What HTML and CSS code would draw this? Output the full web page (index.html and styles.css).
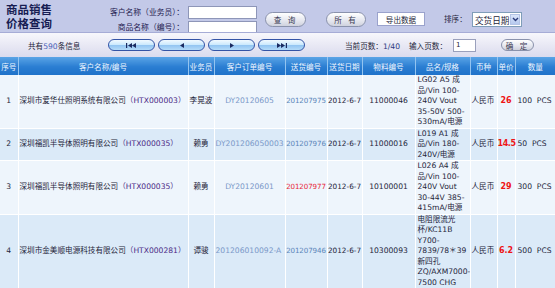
FILE: index.html
```html
<!DOCTYPE html>
<html lang="zh-CN">
<head>
<meta charset="UTF-8" />
<title>商品销售价格查询</title>
<link rel="stylesheet" href="styles.css">
</head>
<body>

<div class="topbar">
  <div class="brand">商品销售<br>价格查询</div>
  <div class="query">
    <label for="cust">客户名称（业务员）：</label>
    <input type="text" id="cust" class="field" />
    <label for="goods">商品名称（编号）：</label>
    <input type="text" id="goods" class="field" />
  </div>
  <button class="pill btn-search">查 询</button>
  <button class="pill btn-all">所 有</button>
  <button class="export">导出数据</button>
  <span class="sort-label">排序：</span>
  <div class="select">
    <span>交货日期</span>
    <span class="arrow">
      <svg width="7" height="5" viewBox="0 0 7 5"><path d="M1 1 L3.5 3.5 L6 1" fill="none" stroke="#2a3a78" stroke-width="1.4"/></svg>
    </span>
  </div>
</div>

<div class="pager">
  <span class="count">共有<b>590</b>条信息</span>
  <button class="nav"><svg width="11" height="5" viewBox="0 0 11 5"><rect x="0" y="0" width="1.2" height="5" fill="#1a2a60"/><path d="M6 0 L2 2.5 L6 5Z M10 0 L6 2.5 L10 5Z" fill="#1a2a60"/></svg></button>
  <button class="nav"><svg width="4" height="5" viewBox="0 0 4 5"><path d="M4 0 L0 2.5 L4 5Z" fill="#1a2a60"/></svg></button>
  <button class="nav"><svg width="4" height="5" viewBox="0 0 4 5"><path d="M0 0 L4 2.5 L0 5Z" fill="#1a2a60"/></svg></button>
  <button class="nav"><svg width="11" height="5" viewBox="0 0 11 5"><path d="M1 0 L5 2.5 L1 5Z M5 0 L9 2.5 L5 5Z" fill="#1a2a60"/><rect x="9.8" y="0" width="1.2" height="5" fill="#1a2a60"/></svg></button>
  <span class="page-now">当前页数：<b>1/40</b></span>
  <label class="page-label" for="page">输入页数：</label>
  <input type="text" id="page" class="page-input" value="1" />
  <button class="pill btn-ok">确 定</button>
</div>

<table class="list">
  <colgroup>
    <col style="width:18px"><col style="width:170px"><col style="width:26px"><col style="width:71px">
    <col style="width:42px"><col style="width:35px"><col style="width:53px"><col style="width:55px">
    <col style="width:27px"><col style="width:18px"><col style="width:40px">
  </colgroup>
  <thead>
    <tr>
      <th>序号</th><th>客户名称/编号</th><th>业务员</th><th>客户订单编号</th><th>送货编号</th><th>送货日期</th>
      <th>物料编号</th><th>品名/规格</th><th>币种</th><th>单价</th><th>数量</th>
    </tr>
  </thead>
  <tbody>
    <tr class="odd">
      <td>1</td>
      <td class="name">深圳市爱华仕照明系统有限公司<span class="code">（HTX000003）</span></td>
      <td>李晃波</td>
      <td class="order">DY20120605</td>
      <td class="ship">201207975</td>
      <td class="date">2012-6-7</td>
      <td>11000046</td>
      <td class="spec">LG02 A5 成<br>品/Vin 100-<br>240V Vout<br>35-50V 500-<br>530mA/电源</td>
      <td class="cur">人民币</td>
      <td class="price">26</td>
      <td class="qty">100&nbsp;&nbsp;PCS</td>
    </tr>
    <tr class="even">
      <td>2</td>
      <td class="name">深圳福凯半导体照明有限公司<span class="code">（HTX000035）</span></td>
      <td>赖勇</td>
      <td class="order left">DY201206050003</td>
      <td class="ship">201207976</td>
      <td class="date">2012-6-7</td>
      <td>11000016</td>
      <td class="spec">L019 A1 成<br>品/Vin 180-<br>240V/电源</td>
      <td class="cur">人民币</td>
      <td class="price left">14.5</td>
      <td class="qty">50&nbsp;&nbsp;PCS</td>
    </tr>
    <tr class="odd">
      <td>3</td>
      <td class="name">深圳福凯半导体照明有限公司<span class="code">（HTX000035）</span></td>
      <td>赖勇</td>
      <td class="order">DY20120601</td>
      <td class="ship red">201207977</td>
      <td class="date">2012-6-7</td>
      <td>10100001</td>
      <td class="spec">L026 A4 成<br>品/Vin 100-<br>240V Vout<br>30-44V 385-<br>415mA/电源</td>
      <td class="cur">人民币</td>
      <td class="price">29</td>
      <td class="qty">300&nbsp;&nbsp;PCS</td>
    </tr>
    <tr class="even">
      <td>4</td>
      <td class="name">深圳市金美顺电源科技有限公司<span class="code">（HTX000281）</span></td>
      <td>谭骏</td>
      <td class="order left">201206010092-A</td>
      <td class="ship">201207946</td>
      <td class="date">2012-6-7</td>
      <td>10300093</td>
      <td class="spec">电阻限流光<br>杯/KC11B<br>Y700-<br>7839/78＊39<br>新四孔<br>ZQ/AXM7000-<br>7500 CHG</td>
      <td class="cur">人民币</td>
      <td class="price">6.2</td>
      <td class="qty">500&nbsp;&nbsp;PCS</td>
    </tr>
  </tbody>
</table>

</body>
</html>
```

FILE: styles.css
```css
body { margin: 0; width: 555px; font-family: "DejaVu Sans", "Noto Sans CJK SC", sans-serif; font-size: 7.6px; color: #1e1e3a; background: #fff; }
button, input { font-family: inherit; font-size: inherit; color: inherit; margin: 0; }

.topbar { display: flex; align-items: flex-start; height: 32px; overflow: hidden; background: #c3c9e8; }
.brand { width: 56px; margin-top: 3px; padding-left: 6px; font-size: 11.5px; line-height: 14px; font-weight: bold; color: #161c52; }
.query { display: grid; grid-template-columns: 122px 69px; column-gap: 4px; row-gap: 2px; margin-top: 6px; }
.query label { text-align: right; line-height: 13px; color: #1e2050; font-size: 7.8px; }
.field { height: 13px; box-sizing: border-box; border: 1px solid #8e96b8; background: #fff; padding: 0; }

.pill { box-sizing: border-box; height: 15px; padding: 0; border: 1px solid #8a92ac; border-radius: 8px; background: linear-gradient(#ffffff, #e4e6ee 60%, #cfd2de); color: #3a3a52; cursor: pointer; letter-spacing: 2px; }
.btn-search { width: 41px; margin: 12px 0 0 8px; }
.btn-all { width: 40px; margin: 12px 0 0 20px; }
.export { box-sizing: border-box; width: 48px; height: 14px; margin: 12px 0 0 11px; padding: 0; border: 1px solid #9aa2cc; background: #fff; color: #1e1e3a; }
.sort-label { margin: 14px 0 0 19px; width: 26px; line-height: 12px; }
.select { box-sizing: border-box; display: flex; align-items: center; justify-content: space-between; width: 50px; height: 15px; margin: 12px 0 0 2px; padding-left: 2px; border: 1px solid #7f9db9; background: #fff; font-size: 8.6px; }
.arrow { display: flex; align-items: center; justify-content: center; width: 10px; height: 11px; margin-right: 1px; background: linear-gradient(#dbe6fb, #b6c9ef); border: 1px solid #b4c4e6; box-sizing: border-box; }

.pager { display: flex; align-items: center; height: 25px; background: linear-gradient(#f7f7fc, #e6e6f3 60%, #dadbee); border-top: 1px solid #a6acd6; box-sizing: border-box; }
.count { width: 80px; margin-left: 28px; }
.count b { font-weight: normal; color: #4a62b8; }
.nav { box-sizing: border-box; width: 47px; height: 12px; margin-right: 3px; padding: 0; display: flex; align-items: center; justify-content: center; border: 1px solid #3454a6; border-radius: 7px; background: linear-gradient(#f2faff, #cdeafd 45%, #94c6f2 55%, #b4dbf8); cursor: pointer; }
.page-now { margin-left: 37px; }
.page-now b { font-weight: normal; color: #2a3a80; }
.page-label { margin-left: 9px; }
.page-input { box-sizing: border-box; width: 23px; height: 13px; margin-left: 6px; padding: 0 0 0 2px; border: 1px solid #9aa0bc; background: #fff; font-size: 7px; }
.btn-ok { width: 33px; height: 12px; margin-left: 25px; }

.list { width: 555px; border-collapse: collapse; table-layout: fixed; }
.list th { height: 18px; padding: 0; background: linear-gradient(#5aa4e6, #2a7dd2 55%, #1f72c9); color: #eef6ff; font-weight: normal; border-right: 1px solid #93c4f0; white-space: nowrap; overflow: hidden; text-align: center; }
.list td { padding: 0; line-height: 10.5px; border-right: 1px solid #fff; border-bottom: 1px solid #fff; white-space: nowrap; overflow: hidden; text-align: center; }
.list th:last-child, .list td:last-child { border-right: 0; }
.list tr.odd td { background: #eef5fc; }
.list tr.even td { background: #dbeaf8; }

.list td.name { text-align: left; padding-left: 1px; }
.code { color: #4b2a86; }
.order { color: #7a98c8; }
.list td.order.left { text-align: left; padding-left: 1px; }
.list td.ship { color: #5b86ba; font-size: 7.1px; letter-spacing: -0.1px; text-overflow: clip; }
.list td.ship.red { color: #e8283a; }
.list td.date { font-size: 7.3px; }
.list td.spec { text-align: left; padding-left: 2px; }
.list td.cur { text-align: left; padding-left: 1px; }
.list td.price { color: #ee1515; font-weight: bold; font-size: 8px; overflow: visible; }
.list td.price.left { text-align: left; letter-spacing: -0.4px; }
.list td.qty { text-align: left; padding-left: 2px; }
```
